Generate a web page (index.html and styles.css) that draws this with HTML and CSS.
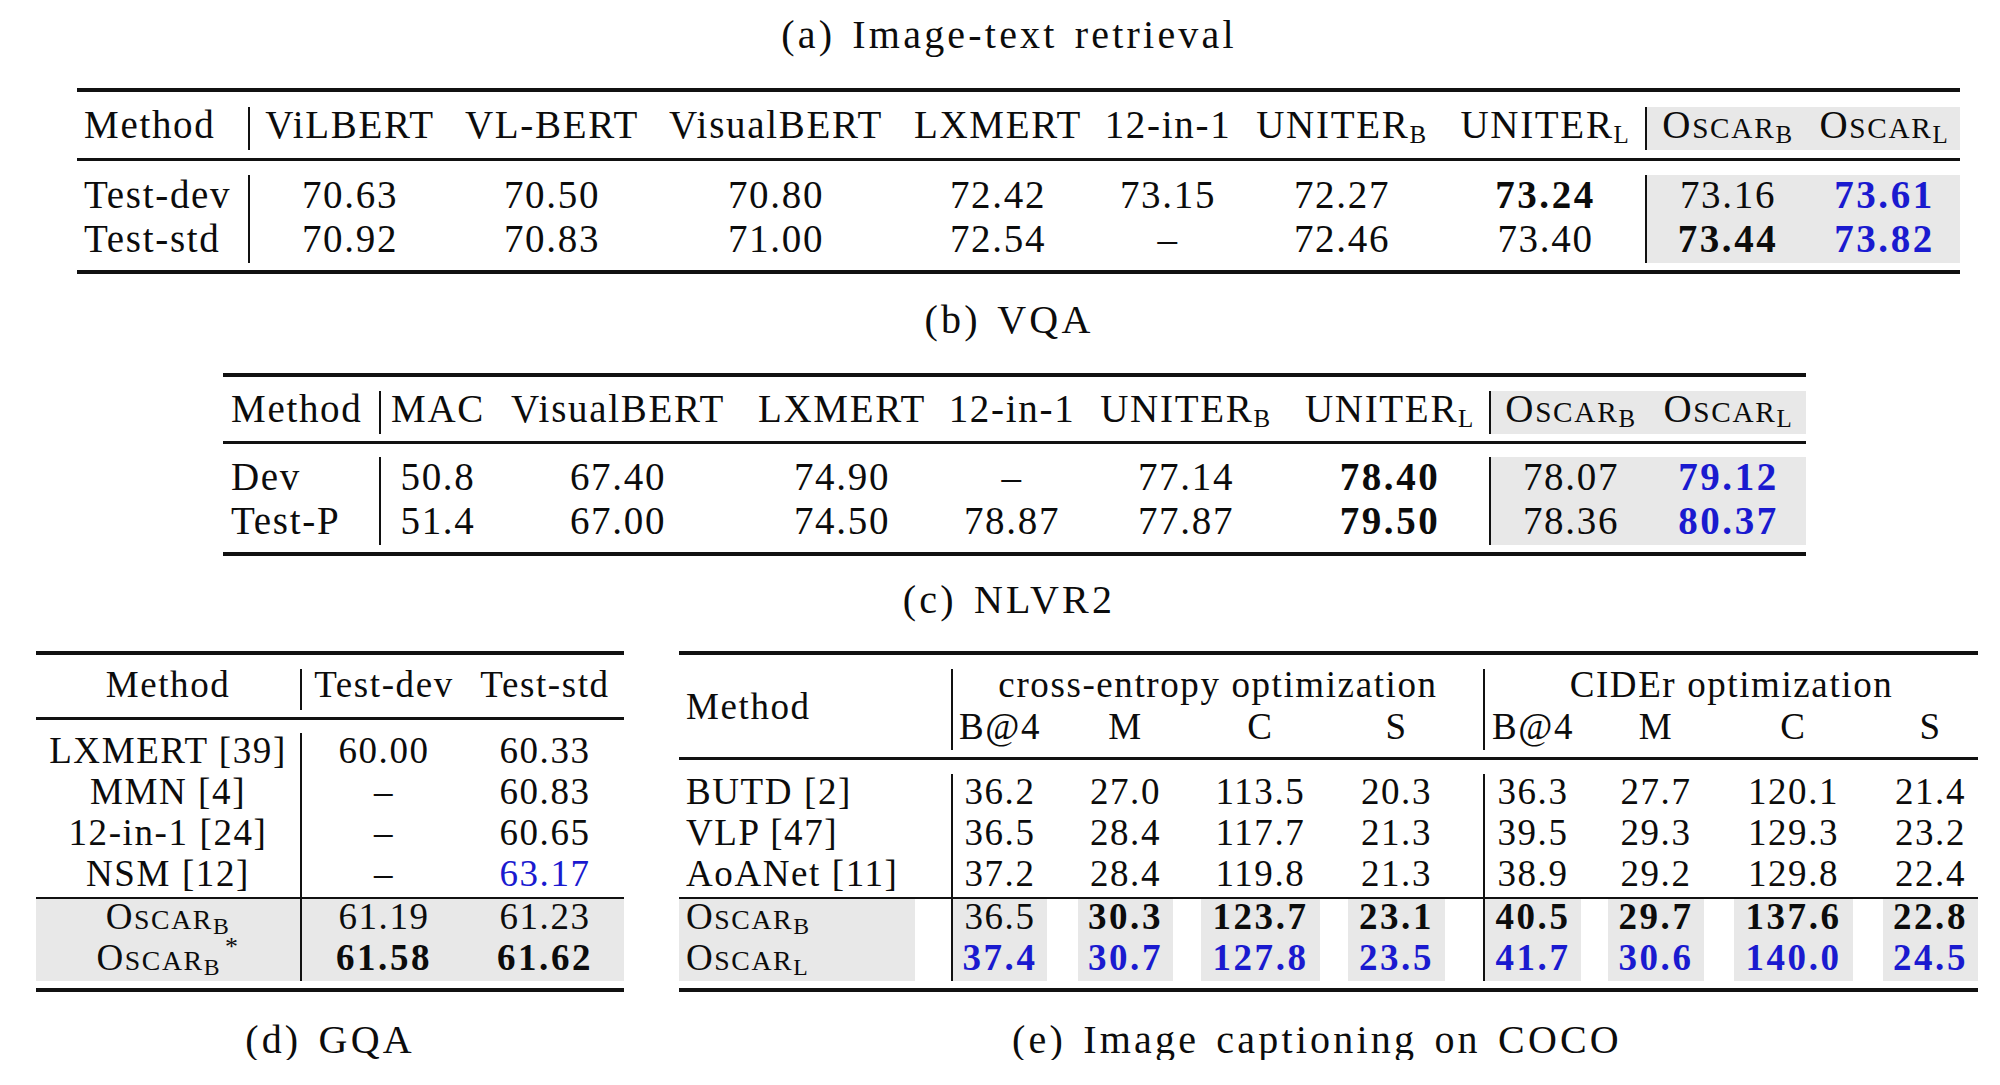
FILE: index.html
```html
<!DOCTYPE html>
<html lang="en">
<head>
<meta charset="utf-8">
<title>Oscar results tables</title>
<link rel="stylesheet" href="styles.css">
</head>
<body>
<main class="page">
  <div class="cap cap-wide">(a) Image-text retrieval</div>

  <section class="tbl ta">
    <div class="rule-top"></div>
    <div class="grid head">
      <div class="c m">Method</div>
      <div class="c">ViLBERT</div>
      <div class="c">VL-BERT</div>
      <div class="c">VisualBERT</div>
      <div class="c">LXMERT</div>
      <div class="c">12-in-1</div>
      <div class="c">UNITER<sub>B</sub></div>
      <div class="c">UNITER<sub>L</sub></div>
      <div class="c sh vl">O<span class="sc">SCAR</span><sub>B</sub></div>
      <div class="c sh">O<span class="sc">SCAR</span><sub>L</sub></div>
    </div>
    <div class="rule-mid"></div>
    <div class="grid body">
      <div class="c m">Test-dev</div>
      <div class="c">70.63</div>
      <div class="c">70.50</div>
      <div class="c">70.80</div>
      <div class="c">72.42</div>
      <div class="c">73.15</div>
      <div class="c">72.27</div>
      <div class="c b">73.24</div>
      <div class="c sh vl">73.16</div>
      <div class="c sh b bl">73.61</div>

      <div class="c m">Test-std</div>
      <div class="c">70.92</div>
      <div class="c">70.83</div>
      <div class="c">71.00</div>
      <div class="c">72.54</div>
      <div class="c">–</div>
      <div class="c">72.46</div>
      <div class="c">73.40</div>
      <div class="c sh vl b">73.44</div>
      <div class="c sh b bl">73.82</div>
    </div>
    <div class="rule-bot"></div>
  </section>

  <div class="cap cap-wide cap-b">(b) VQA</div>

  <section class="tbl tb">
    <div class="rule-top"></div>
    <div class="grid head">
      <div class="c m">Method</div>
      <div class="c">MAC</div>
      <div class="c">VisualBERT</div>
      <div class="c">LXMERT</div>
      <div class="c">12-in-1</div>
      <div class="c">UNITER<sub>B</sub></div>
      <div class="c">UNITER<sub>L</sub></div>
      <div class="c sh vl">O<span class="sc">SCAR</span><sub>B</sub></div>
      <div class="c sh">O<span class="sc">SCAR</span><sub>L</sub></div>
    </div>
    <div class="rule-mid"></div>
    <div class="grid body">
      <div class="c m">Dev</div>
      <div class="c">50.8</div>
      <div class="c">67.40</div>
      <div class="c">74.90</div>
      <div class="c">–</div>
      <div class="c">77.14</div>
      <div class="c b">78.40</div>
      <div class="c sh vl">78.07</div>
      <div class="c sh b bl">79.12</div>

      <div class="c m">Test-P</div>
      <div class="c">51.4</div>
      <div class="c">67.00</div>
      <div class="c">74.50</div>
      <div class="c">78.87</div>
      <div class="c">77.87</div>
      <div class="c b">79.50</div>
      <div class="c sh vl">78.36</div>
      <div class="c sh b bl">80.37</div>
    </div>
    <div class="rule-bot"></div>
  </section>

  <div class="cap cap-wide cap-c">(c) NLVR2</div>

  <div class="lower">
    <figure class="fig fig-d">
      <section class="tbl td">
        <div class="rule-top"></div>
        <div class="grid head">
          <div class="c m">Method</div>
          <div class="c">Test-dev</div>
          <div class="c">Test-std</div>
        </div>
        <div class="rule-mid"></div>
        <div class="grid body">
          <div class="c m">LXMERT [39]</div>
          <div class="c">60.00</div>
          <div class="c">60.33</div>
          <div class="c m">MMN [4]</div>
          <div class="c">–</div>
          <div class="c">60.83</div>
          <div class="c m">12-in-1 [24]</div>
          <div class="c">–</div>
          <div class="c">60.65</div>
          <div class="c m">NSM [12]</div>
          <div class="c">–</div>
          <div class="c bl">63.17</div>
        </div>
        <div class="grid body ours">
          <div class="c m">O<span class="sc">SCAR</span><sub>B</sub></div>
          <div class="c">61.19</div>
          <div class="c">61.23</div>
          <div class="c m">O<span class="sc">SCAR</span><sub>B</sub><sup>*</sup></div>
          <div class="c b">61.58</div>
          <div class="c b">61.62</div>
        </div>
        <div class="rule-bot"></div>
      </section>
      <figcaption class="cap cap-d">(d) GQA</figcaption>
    </figure>

    <figure class="fig fig-e">
      <section class="tbl te">
        <div class="rule-top"></div>
        <div class="grid head">
          <div class="c m span2">Method</div>
          <div class="c r1 g1">cross-entropy optimization</div>
          <div class="c r1 g2 vl">CIDEr optimization</div>
          <div class="c r2 p1">B@4</div>
          <div class="c r2 p2">M</div>
          <div class="c r2 p3">C</div>
          <div class="c r2 p4">S</div>
          <div class="c r2 p5 vl">B@4</div>
          <div class="c r2 p6">M</div>
          <div class="c r2 p7">C</div>
          <div class="c r2 p8">S</div>
        </div>
        <div class="rule-mid"></div>
        <div class="grid body">
          <div class="c m">BUTD [2]</div>
          <div class="c p1">36.2</div>
          <div class="c p2">27.0</div>
          <div class="c p3">113.5</div>
          <div class="c p4">20.3</div>
          <div class="c p5 vl">36.3</div>
          <div class="c p6">27.7</div>
          <div class="c p7">120.1</div>
          <div class="c p8">21.4</div>

          <div class="c m">VLP [47]</div>
          <div class="c p1">36.5</div>
          <div class="c p2">28.4</div>
          <div class="c p3">117.7</div>
          <div class="c p4">21.3</div>
          <div class="c p5 vl">39.5</div>
          <div class="c p6">29.3</div>
          <div class="c p7">129.3</div>
          <div class="c p8">23.2</div>

          <div class="c m">AoANet [11]</div>
          <div class="c p1">37.2</div>
          <div class="c p2">28.4</div>
          <div class="c p3">119.8</div>
          <div class="c p4">21.3</div>
          <div class="c p5 vl">38.9</div>
          <div class="c p6">29.2</div>
          <div class="c p7">129.8</div>
          <div class="c p8">22.4</div>
        </div>
        <div class="grid body ours">
          <div class="c m">O<span class="sc">SCAR</span><sub>B</sub></div>
          <div class="c p1">36.5</div>
          <div class="c p2 b">30.3</div>
          <div class="c p3 b">123.7</div>
          <div class="c p4 b">23.1</div>
          <div class="c p5 vl b">40.5</div>
          <div class="c p6 b">29.7</div>
          <div class="c p7 b">137.6</div>
          <div class="c p8 b">22.8</div>

          <div class="c m">O<span class="sc">SCAR</span><sub>L</sub></div>
          <div class="c p1 b bl">37.4</div>
          <div class="c p2 b bl">30.7</div>
          <div class="c p3 b bl">127.8</div>
          <div class="c p4 b bl">23.5</div>
          <div class="c p5 vl b bl">41.7</div>
          <div class="c p6 b bl">30.6</div>
          <div class="c p7 b bl">140.0</div>
          <div class="c p8 b bl">24.5</div>
        </div>
        <div class="rule-bot"></div>
      </section>
      <figcaption class="cap cap-e">(e) Image captioning on COCO</figcaption>
    </figure>
  </div>
</main>
</body>
</html>
```

FILE: styles.css
```css
* {
  box-sizing: border-box;
  margin: 0;
  padding: 0;
}

html,
body {
  background: #ffffff;
}

body {
  width: 2000px;
  font-family: "Liberation Serif", "Times New Roman", serif;
  color: #0c0c0c;
}

.page {
  display: flex;
  flex-direction: column;
  padding-top: 15px;
}

/* captions */
.cap {
  display: block;
  height: 40px;
  font-size: 40px;
  line-height: 40px;
  letter-spacing: 3.2px;
  word-spacing: 4px;
  text-align: center;
  white-space: nowrap;
}

.cap-wide {
  padding-left: 18px;
}

.cap-b {
  margin-top: 26px;
}

.cap-c {
  margin-top: 24px;
}

.cap-d,
.cap-e {
  margin-top: 28px;
}

.cap-e {
  padding-right: 23px;
}

/* generic table parts */
.tbl {
  display: flex;
  flex-direction: column;
}

.rule-top,
.rule-bot {
  height: 4px;
  background: #111111;
}

.rule-mid {
  height: 3px;
  background: #111111;
}

.grid {
  display: grid;
}

.c {
  text-align: center;
  white-space: nowrap;
}

.m {
  text-align: left;
  border-right: 2px solid #111111;
}

.vl {
  border-left: 2px solid #111111;
}

.sh {
  background: #e8e8e8;
}

.b {
  font-weight: bold;
  letter-spacing: 2.6px;
}

.bl {
  color: #1a1acf;
}

sub {
  font-size: 0.64em;
  line-height: 0;
  vertical-align: -5px;
}

sup {
  font-size: 0.7em;
  line-height: 0;
  vertical-align: 15px;
  margin-left: 4px;
}

.sc {
  font-size: 0.75em;
}

/* (a) */
.ta {
  margin: 33px 0 0 77px;
  width: 1883px;
  font-size: 39px;
  letter-spacing: 1.7px;
}

.ta .grid {
  grid-template-columns: 173px 200px 204px 244px 200px 140px 208px 199px 164px 151px;
}

.ta .m {
  padding-left: 7px;
}

/* (b) */
.tb {
  margin: 33px 0 0 223px;
  width: 1583px;
  font-size: 39px;
  letter-spacing: 1.7px;
}

.tb .grid {
  grid-template-columns: 158px 114px 246px 202px 138px 210px 198px 162px 155px;
}

.tb .m {
  padding-left: 8px;
}

.ta .head,
.tb .head {
  grid-auto-rows: 43px;
  line-height: 36px;
}

.ta .head {
  margin-top: 15px;
}

.tb .head {
  margin-top: 14px;
}

.ta .rule-mid {
  margin-top: 8px;
}

.tb .rule-mid {
  margin-top: 7px;
}

.ta .body,
.tb .body {
  grid-auto-rows: 44px;
  line-height: 39px;
}

.ta .body {
  margin-top: 14px;
}

.tb .body {
  margin-top: 13px;
}

.ta .rule-bot,
.tb .rule-bot {
  margin-top: 7px;
}

/* lower row: (d) and (e) */
.lower {
  display: flex;
  align-items: flex-start;
  margin-top: 31px;
}

.fig {
  display: flex;
  flex-direction: column;
}

.fig-d {
  margin-left: 36px;
  width: 588px;
}

.fig-e {
  margin-left: 55px;
  width: 1299px;
}

.td,
.te {
  font-size: 37px;
  letter-spacing: 1.6px;
}

.td .head,
.te .head {
  margin-top: 14px;
}

.td .rule-mid,
.te .rule-mid {
  margin-top: 7px;
}

.td .body {
  margin-top: 13px;
}

.te .body {
  margin-top: 14px;
}

.td .body,
.te .body {
  grid-auto-rows: 41px;
  line-height: 35px;
}

.td .ours,
.te .ours {
  margin-top: 0;
  border-top: 2px solid #111111;
}

.td .rule-bot,
.te .rule-bot {
  margin-top: 7px;
}

/* (d) */
.td .grid {
  grid-template-columns: 266px 164px 158px;
}

.td .m {
  text-align: center;
}

.td .head {
  grid-auto-rows: 41px;
  line-height: 31px;
}

.td .ours .c {
  background: #e8e8e8;
}

/* (e) */
.te .grid {
  grid-template-columns: 274px 109px 125px 147px 149px 111px 125px 149px 110px;
}

.te .m {
  padding-left: 7px;
}

.te .head {
  grid-template-rows: 40px 41px;
}

.te .span2 {
  grid-row: 1 / span 2;
  grid-column: 1;
  line-height: 31px;
  padding-top: 22px;
}

.te .r1 {
  line-height: 31px;
}

.te .r2 {
  line-height: 35px;
}

.te .g1 {
  grid-column: 2 / span 4;
}

.te .g2 {
  grid-column: 6 / span 4;
}

.p1 { padding: 0 15px 0 0; }
.p2 { padding: 0 14px 0 16px; }
.p3 { padding: 0 14px 0 14px; }
.p4 { padding: 0 38px 0 14px; }
.p5 { padding: 0 13px 0 0; }
.p6 { padding: 0 15px 0 14px; }
.p7 { padding: 0 15px 0 15px; }
.p8 { padding: 0 0 0 15px; }

.te .ours .c {
  background-color: #e8e8e8;
  background-clip: content-box;
}

.te .ours .m {
  background: linear-gradient(to right, #e8e8e8 236px, transparent 236px);
}
```
